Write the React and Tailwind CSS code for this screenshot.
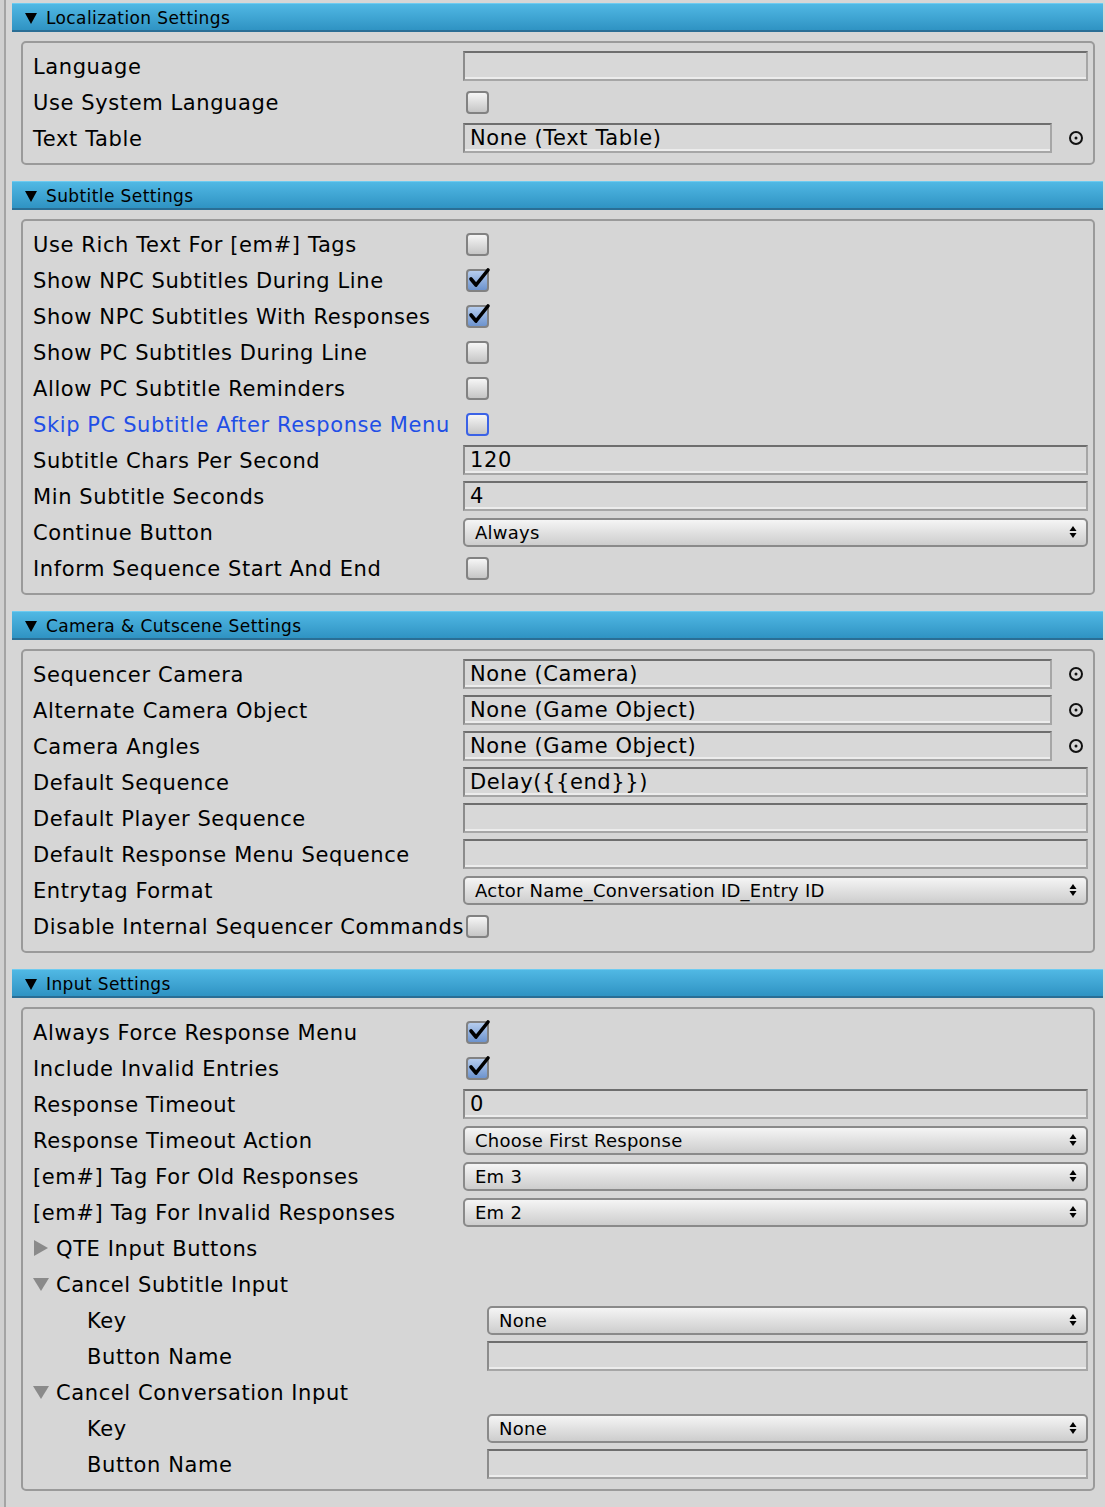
import React from "react";

const FONT = "font-['DejaVu_Sans','Liberation_Sans',sans-serif]";

// ── Small inspector widgets ───────────────────────────────────────────────────
const Header = ({ title }) => (
  <div className="h-[29px] flex items-center pl-[13px] gap-[9px] bg-gradient-to-b from-[#50b8e4] to-[#2f93c3] border-t border-t-[#6ecbf0] border-b-2 border-b-[#2a6e95] text-[17px] tracking-[0.4px] text-black">
    <svg width="12" height="11" viewBox="0 0 12 11" className="shrink-0 mt-[2px]">
      <path d="M0 0 L12 0 L6 11 Z" fill="#000" />
    </svg>
    <span className="pt-[3px]">{title}</span>
  </div>
);

const Box = ({ children }) => (
  <div className="mt-[9px] mb-[16px] ml-[9px] mr-[8px] border-2 border-[#9a9a9a] rounded-[5px] pt-[5px] pb-[7px] pl-[10px] pr-[5px]">
    {children}
  </div>
);

const Row = ({ label, children, indent = 0, blue = false, valueIndent = 0 }) => (
  <div className="h-[36px] flex items-center">
    <div
      className={`w-[430px] shrink-0 whitespace-nowrap pt-[3px] text-[21px] tracking-[0.6px] ${blue ? "text-[#1f4fe6]" : "text-black"}`}
      style={{ paddingLeft: indent }}
    >
      {label}
    </div>
    <div className="flex-1 flex items-center" style={{ paddingLeft: valueIndent }}>
      {children}
    </div>
  </div>
);

const TextField = ({ value = "", className = "flex-1" }) => (
  <div className={`${className} h-[30px] flex items-center px-[5px] pt-[2px] text-[21px] tracking-[0.6px] text-black bg-[#d8d8d8] border-2 border-t-[#6e6e6e] border-l-[#8c8c8c] border-r-[#a6a6a6] border-b-[#a6a6a6] shadow-[inset_0_-2px_0_#ececec]`}>
    {value}
  </div>
);

const Picker = () => (
  <svg width="16" height="16" viewBox="0 0 16 16" className="shrink-0">
    <circle cx="8" cy="8" r="6" fill="none" stroke="#111" strokeWidth="2" />
    <circle cx="8" cy="8" r="1.5" fill="#111" />
  </svg>
);

const ObjectField = ({ value }) => (
  <div className="flex-1 flex items-center">
    <TextField value={value} className="w-[589px]" />
    <div className="flex-1 flex justify-center pl-[11px]">
      <Picker />
    </div>
  </div>
);

const Checkbox = ({ checked = false, highlight = false }) => (
  <div className="relative ml-[3px] mt-[1px] w-[23px] h-[23px]">
    <div
      className={`w-full h-full rounded-[4px] border-2 ${highlight ? "border-[#3b62e6]" : "border-[#828282]"} ${
        checked ? "bg-gradient-to-b from-[#b6cdee] to-[#6d93cd]" : "bg-gradient-to-b from-[#f6f6f6] to-[#c6c6c6]"
      }`}
    />
    {checked && (
      <svg width="26" height="26" viewBox="0 0 26 26" className="absolute -top-[4px] left-[0px]">
        <path d="M5 14 L10 20 L22 5" fill="none" stroke="#000" strokeWidth="3.6" strokeLinecap="round" strokeLinejoin="round" />
      </svg>
    )}
  </div>
);

const Dropdown = ({ value }) => (
  <div className="flex-1 h-[29px] flex items-center justify-between pl-[10px] pr-[9px] rounded-[5px] border-2 border-[#8a8a8a] bg-gradient-to-b from-[#f5f5f5] to-[#cdcdcd] text-[18px] tracking-[0.25px] text-black">
    <span className="pt-[1px]">{value}</span>
    <svg width="8" height="14" viewBox="0 0 8 14">
      <path d="M4 1 L7.5 6 L0.5 6 Z" fill="#000" />
      <path d="M4 13 L7.5 8 L0.5 8 Z" fill="#000" />
    </svg>
  </div>
);

const Foldout = ({ label, open }) => (
  <div className="h-[36px] flex items-center text-[21px] tracking-[0.6px] text-black">
    <span className="w-[23px] flex justify-start">
      {open ? (
        <svg width="16" height="14" viewBox="0 0 16 14"><path d="M0 1 L16 1 L8 14 Z" fill="#8a8a8a" /></svg>
      ) : (
        <svg width="15" height="16" viewBox="0 0 15 16"><path d="M1 0 L15 8 L1 16 Z" fill="#8a8a8a" /></svg>
      )}
    </span>
    <span className="pt-[3px]">{label}</span>
  </div>
);

// ── Page ─────────────────────────────────────────────────────────────────────
export default function App() {
  return (
    <div className={`${FONT} min-h-[1507px] bg-[#d6d6d6] flex`}>
      <div className="w-[4px] bg-[#d0d0d0]" />
      <div className="flex-1 border-l-2 border-[#a4a4a4] pl-[6px] pr-[2px] pt-[3px]">
        <Header title="Localization Settings" />
        <Box>
          <Row label="Language"><TextField /></Row>
          <Row label="Use System Language"><Checkbox /></Row>
          <Row label="Text Table"><ObjectField value="None (Text Table)" /></Row>
        </Box>

        <Header title="Subtitle Settings" />
        <Box>
          <Row label="Use Rich Text For [em#] Tags"><Checkbox /></Row>
          <Row label="Show NPC Subtitles During Line"><Checkbox checked /></Row>
          <Row label="Show NPC Subtitles With Responses"><Checkbox checked /></Row>
          <Row label="Show PC Subtitles During Line"><Checkbox /></Row>
          <Row label="Allow PC Subtitle Reminders"><Checkbox /></Row>
          <Row label="Skip PC Subtitle After Response Menu" blue><Checkbox highlight /></Row>
          <Row label="Subtitle Chars Per Second"><TextField value="120" /></Row>
          <Row label="Min Subtitle Seconds"><TextField value="4" /></Row>
          <Row label="Continue Button"><Dropdown value="Always" /></Row>
          <Row label="Inform Sequence Start And End"><Checkbox /></Row>
        </Box>

        <Header title="Camera & Cutscene Settings" />
        <Box>
          <Row label="Sequencer Camera"><ObjectField value="None (Camera)" /></Row>
          <Row label="Alternate Camera Object"><ObjectField value="None (Game Object)" /></Row>
          <Row label="Camera Angles"><ObjectField value="None (Game Object)" /></Row>
          <Row label="Default Sequence"><TextField value="Delay({{end}})" /></Row>
          <Row label="Default Player Sequence"><TextField /></Row>
          <Row label="Default Response Menu Sequence"><TextField /></Row>
          <Row label="Entrytag Format"><Dropdown value="Actor Name_Conversation ID_Entry ID" /></Row>
          <Row label="Disable Internal Sequencer Commands"><Checkbox /></Row>
        </Box>

        <Header title="Input Settings" />
        <Box>
          <Row label="Always Force Response Menu"><Checkbox checked /></Row>
          <Row label="Include Invalid Entries"><Checkbox checked /></Row>
          <Row label="Response Timeout"><TextField value="0" /></Row>
          <Row label="Response Timeout Action"><Dropdown value="Choose First Response" /></Row>
          <Row label="[em#] Tag For Old Responses"><Dropdown value="Em 3" /></Row>
          <Row label="[em#] Tag For Invalid Responses"><Dropdown value="Em 2" /></Row>
          <Foldout label="QTE Input Buttons" open={false} />
          <Foldout label="Cancel Subtitle Input" open />
          <Row label="Key" indent={54} valueIndent={24}><Dropdown value="None" /></Row>
          <Row label="Button Name" indent={54} valueIndent={24}><TextField /></Row>
          <Foldout label="Cancel Conversation Input" open />
          <Row label="Key" indent={54} valueIndent={24}><Dropdown value="None" /></Row>
          <Row label="Button Name" indent={54} valueIndent={24}><TextField /></Row>
        </Box>
        <div className="ml-[9px] border-t-2 border-[#a4a4a4]" />
      </div>
    </div>
  );
}
